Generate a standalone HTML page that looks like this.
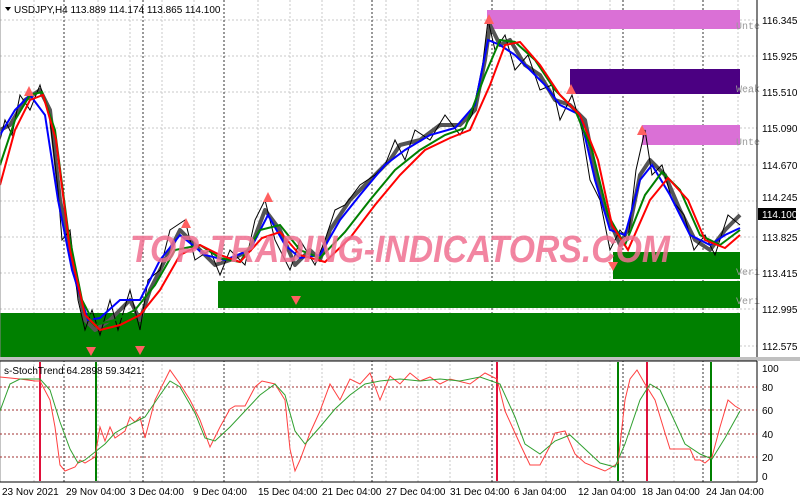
<!DOCTYPE html>
<html><head><meta charset="utf-8"><style>
body{margin:0;width:800px;height:500px;background:#fff;overflow:hidden;font-family:"Liberation Sans",sans-serif}
svg{display:block}
text{font-family:"Liberation Sans",sans-serif;font-size:10px;fill:#000}
</style></head><body>
<svg width="800" height="500" viewBox="0 0 800 500">
<rect width="800" height="500" fill="#fff"/>
<!-- grid main -->
<g stroke="#c8c8c8" stroke-dasharray="2,2" stroke-width="1">
<line x1="0" y1="20" x2="757" y2="20"/><line x1="0" y1="56" x2="757" y2="56"/><line x1="0" y1="92" x2="757" y2="92"/><line x1="0" y1="128" x2="757" y2="128"/><line x1="0" y1="165" x2="757" y2="165"/><line x1="0" y1="201" x2="757" y2="201"/><line x1="0" y1="237" x2="757" y2="237"/><line x1="0" y1="273" x2="757" y2="273"/><line x1="0" y1="309" x2="757" y2="309"/><line x1="0" y1="346" x2="757" y2="346"/>
<line x1="34" y1="0" x2="34" y2="482"/><line x1="98" y1="0" x2="98" y2="482"/><line x1="130" y1="0" x2="130" y2="482"/><line x1="162" y1="0" x2="162" y2="482"/><line x1="194" y1="0" x2="194" y2="482"/><line x1="258" y1="0" x2="258" y2="482"/><line x1="290" y1="0" x2="290" y2="482"/><line x1="322" y1="0" x2="322" y2="482"/><line x1="354" y1="0" x2="354" y2="482"/><line x1="386" y1="0" x2="386" y2="482"/><line x1="418" y1="0" x2="418" y2="482"/><line x1="450" y1="0" x2="450" y2="482"/><line x1="514" y1="0" x2="514" y2="482"/><line x1="546" y1="0" x2="546" y2="482"/><line x1="578" y1="0" x2="578" y2="482"/><line x1="610" y1="0" x2="610" y2="482"/><line x1="674" y1="0" x2="674" y2="482"/><line x1="738" y1="0" x2="738" y2="482"/>
</g>
<g stroke="#333" stroke-dasharray="2,2" stroke-width="1">
<line x1="64" y1="0" x2="64" y2="482"/><line x1="143" y1="0" x2="143" y2="482"/><line x1="224" y1="0" x2="224" y2="482"/><line x1="372" y1="0" x2="372" y2="482"/><line x1="492" y1="0" x2="492" y2="482"/><line x1="623" y1="0" x2="623" y2="482"/><line x1="703" y1="0" x2="703" y2="482"/>
</g>
<!-- zones -->
<rect x="487" y="10" width="253" height="19" fill="#da70d6"/>
<rect x="570" y="69" width="170" height="25" fill="#4b0082"/>
<rect x="642" y="125" width="98" height="20" fill="#da70d6"/>
<rect x="613" y="252" width="127" height="27" fill="#008000"/>
<rect x="218" y="281" width="522" height="27" fill="#008000"/>
<rect x="0" y="313" width="740" height="44" fill="#008000"/>
<g font-family="Liberation Mono" font-size="10" fill="#999">
<text x="736" y="29" style="fill:#999;font-family:'Liberation Mono'">Unte</text>
<text x="736" y="92" style="fill:#999;font-family:'Liberation Mono'">Weak</text>
<text x="736" y="145" style="fill:#999;font-family:'Liberation Mono'">Unte</text>
<text x="736" y="275" style="fill:#999;font-family:'Liberation Mono'">Veri</text>
<text x="736" y="304" style="fill:#999;font-family:'Liberation Mono'">Veri</text>
</g>
<!-- candles -->
<polyline fill="none" stroke="#555" stroke-width="4" stroke-linejoin="round" points="0,130 10,125 25,100 40,90 50,110 60,200 70,250 85,320 95,330 110,320 130,300 140,320 150,290 165,260 180,230 200,250 215,265 230,260 250,250 265,210 280,230 295,265 310,250 320,260 330,230 350,200 370,180 390,160 400,145 420,140 440,125 460,125 475,110 485,60 490,25 500,45 510,40 525,65 540,75 555,100 570,105 585,120 595,170 605,210 620,245 630,225 640,175 650,160 665,175 680,210 695,240 710,250 725,230 740,215"/>
<polyline fill="none" stroke="#000" stroke-width="1" points="0,140 5,120 12,135 20,95 30,110 40,85 50,120 58,190 62,240 70,230 78,300 85,330 92,310 100,335 110,300 118,330 130,290 140,330 148,280 160,270 170,230 185,220 195,260 210,250 220,275 230,250 245,265 255,220 265,200 275,240 290,270 300,240 315,265 325,240 335,210 345,205 360,185 375,175 385,165 395,140 405,160 415,130 430,140 445,115 460,135 472,115 482,70 488,20 495,50 505,35 515,70 528,55 540,90 552,85 560,120 572,95 582,130 590,180 600,200 610,250 620,230 628,240 636,170 645,130 652,175 662,165 672,200 684,215 694,250 705,235 715,255 728,215 740,225"/>
<polyline fill="none" stroke="#0000ff" stroke-width="2" points="0,135 15,110 30,95 45,115 58,200 72,270 88,320 100,318 120,300 140,300 160,260 180,235 205,255 225,260 250,250 268,215 285,245 300,258 320,255 340,220 360,195 385,165 405,150 430,135 455,128 475,105 488,40 500,45 515,55 530,70 545,85 560,105 580,115 595,180 610,230 625,235 640,180 652,165 670,195 690,235 710,245 725,235 740,228"/>
<polyline fill="none" stroke="#008000" stroke-width="2" points="0,165 15,120 30,95 42,92 55,130 68,230 82,300 95,325 115,320 135,310 155,285 175,250 200,245 220,258 240,262 260,230 280,225 300,250 320,258 345,232 370,200 395,170 420,150 445,135 465,128 485,75 500,40 515,42 535,60 555,90 575,110 592,150 608,215 625,245 645,195 662,172 680,190 700,235 720,245 740,230"/>
<polyline fill="none" stroke="#ff0000" stroke-width="2" points="0,185 15,130 30,100 43,95 56,140 70,250 85,315 100,330 120,325 140,315 160,290 180,255 200,245 220,255 240,262 262,238 280,232 300,255 325,262 350,238 375,205 400,175 425,150 450,138 470,130 490,85 505,45 520,42 540,65 560,95 580,115 598,160 612,225 628,250 650,200 668,178 688,200 705,240 725,248 740,235"/>
<!-- arrows -->
<g fill="#ff6060"><polygon points="24,96 29,86 34,96"/><polygon points="263,202 268,192 273,202"/><polygon points="181,228 186,218 191,228"/><polygon points="484,24 489,14 494,24"/><polygon points="566,94 571,84 576,94"/><polygon points="637,135 642,125 647,135"/>
<polygon points="86,347 91,356 96,347"/><polygon points="135,346 140,355 145,346"/><polygon points="291,296 296,305 301,296"/><polygon points="608,262 613,271 618,262"/></g>
<!-- watermark -->
<text x="130" y="262" textLength="540" lengthAdjust="spacingAndGlyphs" style="font-size:38px;font-weight:bold;font-style:italic;fill:#f07090;fill-opacity:0.85">TOP-TRADING-INDICATORS.COM</text>
<!-- header -->
<polygon points="5,7 11,7 8,11" fill="#000"/>
<text x="14" y="13">USDJPY,H4  113.889 114.174 113.865 114.100</text>
<!-- right axis -->
<line x1="757" y1="0" x2="757" y2="482" stroke="#000"/>
<line x1="0" y1="0" x2="0" y2="482" stroke="#888"/>
<g><text x="762" y="24">116.345</text><text x="762" y="60">115.925</text><text x="762" y="96">115.510</text><text x="762" y="132">115.090</text><text x="762" y="169">114.670</text><text x="762" y="201">114.245</text><text x="762" y="241">113.825</text><text x="762" y="277">113.415</text><text x="762" y="313">112.995</text><text x="762" y="350">112.575</text></g>
<rect x="758" y="208" width="38" height="12" fill="#000"/>
<text x="762" y="218" style="fill:#fff">114.100</text>
<!-- separator -->
<rect x="0" y="357" width="800" height="4" fill="#c0c0c0"/>
<line x1="0" y1="361" x2="757" y2="361" stroke="#000"/>
<!-- indicator levels -->
<g stroke="#a03030" stroke-dasharray="2,2"><line x1="0" y1="387" x2="757" y2="387"/><line x1="0" y1="410" x2="757" y2="410"/><line x1="0" y1="434" x2="757" y2="434"/><line x1="0" y1="457" x2="757" y2="457"/></g>
<g stroke-width="2"><line x1="40" y1="362" x2="40" y2="481" stroke="#e0103a"/><line x1="497" y1="362" x2="497" y2="481" stroke="#e0103a"/><line x1="647" y1="362" x2="647" y2="481" stroke="#e0103a"/>
<line x1="96" y1="362" x2="96" y2="481" stroke="#008000"/><line x1="618" y1="362" x2="618" y2="481" stroke="#008000"/><line x1="711" y1="362" x2="711" y2="481" stroke="#008000"/></g>
<polyline fill="none" stroke="#ff4040" stroke-width="1" points="0,377 20,379 35,381 40,381 50,400 55,427 60,465 65,471 75,467 80,460 85,463 95,457 100,427 105,441 110,427 115,438 125,431 130,417 135,422 140,417 145,438 155,400 170,370 180,384 190,400 200,420 210,447 220,427 230,409 235,406 245,406 255,387 262,381 275,384 285,400 290,449 295,471 300,460 310,433 320,411 330,384 340,400 350,379 360,384 370,373 380,400 390,376 400,384 410,373 420,381 430,377 440,384 450,379 470,384 485,373 497,379 505,411 515,433 520,444 530,465 540,465 550,446 555,433 565,431 575,454 585,463 595,467 605,471 612,467 618,463 625,400 630,379 637,370 645,384 655,400 665,433 670,449 680,449 690,449 695,460 700,460 705,463 712,457 720,427 728,400 735,406 740,409"/>
<polyline fill="none" stroke="#30a030" stroke-width="1" points="0,411 10,384 20,379 40,379 50,390 60,422 70,449 78,463 85,460 95,452 105,444 115,433 125,427 135,422 145,417 160,395 170,381 180,387 195,413 205,438 215,441 230,427 245,411 260,395 275,384 285,395 295,431 305,444 320,427 335,409 350,395 365,384 380,381 400,379 420,381 440,379 460,381 480,377 500,384 515,417 525,444 540,454 555,441 570,435 585,449 600,463 615,467 625,444 640,400 650,384 660,390 675,422 685,444 700,454 712,459 725,438 740,411"/>
<text x="4" y="374">s-StochTrend 64.2898 59.3421</text>
<g><text x="762" y="372">100</text><text x="762" y="391">80</text><text x="762" y="414">60</text><text x="762" y="438">40</text><text x="762" y="461">20</text><text x="762" y="480">0</text></g>
<!-- bottom axis -->
<line x1="0" y1="482" x2="757" y2="482" stroke="#000"/>
<g><text x="2" y="495">23 Nov 2021</text><text x="66" y="495">29 Nov 04:00</text><text x="130" y="495">3 Dec 04:00</text><text x="193" y="495">9 Dec 04:00</text><text x="258" y="495">15 Dec 04:00</text><text x="322" y="495">21 Dec 04:00</text><text x="386" y="495">27 Dec 04:00</text><text x="450" y="495">31 Dec 04:00</text><text x="514" y="495">6 Jan 04:00</text><text x="578" y="495">12 Jan 04:00</text><text x="642" y="495">18 Jan 04:00</text><text x="706" y="495">24 Jan 04:00</text></g>
</svg>
</body></html>
